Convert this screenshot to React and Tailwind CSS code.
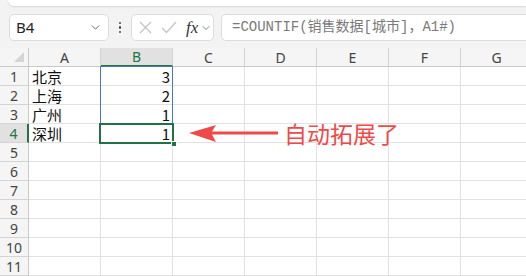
import React from 'react';
import { ChevronDown } from 'lucide-react';

const cols = ['A', 'B', 'C', 'D', 'E', 'F', 'G'];
const data = {
    1: ['北京', '3'],
    2: ['上海', '2'],
    3: ['广州', '1'],
    4: ['深圳', '1'],
};
const rows = [1, 2, 3, 4, 5, 6, 7, 8, 9, 10, 11];

const cellFont = { fontFamily: '"Noto Sans CJK SC", "Noto Sans", sans-serif' };

const App = () => {
    return (
        <div className="w-[526px] h-[276px] overflow-hidden bg-[#f3f3f3] relative" style={cellFont}>
            {/* ribbon bottom edge */}
            <div className="ml-2 h-[6px] bg-white rounded-bl-lg shadow-[0_1px_2px_rgba(0,0,0,0.12)]"></div>

            {/* formula bar */}
            <div className="flex items-center h-[27px] mt-[8px] pl-[9px] gap-0">
                <div className="w-[100px] h-[27px] bg-white border border-[#dcdcdc] rounded-[5px] flex items-center justify-between pl-[6px] pr-[6px]">
                    <span className="text-[15px] text-[#262626] leading-none" style={{ fontFamily: '"Noto Sans", sans-serif' }}>B4</span>
                    <ChevronDown className="w-[13px] h-[13px] text-[#555]" strokeWidth={1.6} />
                </div>
                <div className="w-[22px] flex flex-col items-center gap-[2px]">
                    <span className="w-[2.5px] h-[2.5px] rounded-full bg-[#444]"></span>
                    <span className="w-[2.5px] h-[2.5px] rounded-full bg-[#444]"></span>
                    <span className="w-[2.5px] h-[2.5px] rounded-full bg-[#444]"></span>
                </div>
                <div className="w-[83px] h-[27px] bg-white border border-[#dcdcdc] rounded-[5px] flex items-center pl-[5px]">
                    <svg width="15" height="15" viewBox="0 0 15 15" className="ml-[1px]">
                        <path d="M2 2 L13 13 M13 2 L2 13" stroke="#c4c4c4" strokeWidth="1.3" fill="none" />
                    </svg>
                    <svg width="16" height="15" viewBox="0 0 16 15" className="ml-[8px]">
                        <path d="M1 8 L5.5 12.5 L15 2" stroke="#c4c4c4" strokeWidth="1.3" fill="none" />
                    </svg>
                    <span className="ml-[9px] text-[17px] italic text-[#333] leading-none" style={{ fontFamily: '"Liberation Serif", serif' }}>fx</span>
                    <ChevronDown className="ml-[2px] w-[12px] h-[12px] text-[#666]" strokeWidth={1.6} />
                </div>
                <div className="ml-[7px] flex-1 h-[27px] bg-white border border-[#dcdcdc] rounded-l-[5px] border-r-0 flex items-center pl-[10px]">
                    <span className="text-[14px] text-[#7a7a7a] whitespace-nowrap" style={{ fontFamily: '"Liberation Mono", "Noto Sans CJK SC", monospace' }}>
                        =COUNTIF(销售数据[城市]，A1#)
                    </span>
                </div>
            </div>

            {/* sheet grid */}
            <div className="mt-[7px] relative bg-white">
                <div className="grid grid-cols-[29px_repeat(7,72px)] auto-rows-[19px]">
                    <div className="bg-[#f5f5f5] border-r border-b border-[#c9c9c9] relative">
                        <div className="absolute right-[4px] bottom-[4px] w-0 h-0 border-l-[10px] border-l-transparent border-b-[10px] border-b-[#d4d4d4]"></div>
                    </div>
                    {cols.map((c) => (
                        <div
                            key={c}
                            className={
                                c === 'B'
                                    ? 'bg-[#e1e1e1] border-r border-[#d4d4d4] border-b-2 border-b-[#217346] flex items-center justify-center text-[14px] text-[#217346]'
                                    : 'bg-[#f5f5f5] border-r border-b border-[#d4d4d4] border-b-[#c9c9c9] flex items-center justify-center text-[14px] text-[#444]'
                            }
                            style={{ fontFamily: '"Noto Sans", sans-serif' }}
                        >
                            {c}
                        </div>
                    ))}
                    {rows.map((r) => (
                        <React.Fragment key={r}>
                            <div
                                className={
                                    r === 4
                                        ? 'bg-[#e1e1e1] border-r-2 border-r-[#217346] border-b border-b-[#d4d4d4] flex items-center justify-center text-[14px] text-[#217346]'
                                        : 'bg-[#f5f5f5] border-r border-r-[#c9c9c9] border-b border-b-[#d4d4d4] flex items-center justify-center text-[14px] text-[#444]'
                                }
                                style={{ fontFamily: '"Noto Sans", sans-serif' }}
                            >
                                {r}
                            </div>
                            {cols.map((c, i) => (
                                <div
                                    key={c}
                                    className={
                                        'border-r border-b border-[#e1e1e1] flex items-center text-[15px] text-[#111] leading-none ' +
                                        (i === 1 ? 'justify-end pr-[2px]' : 'pl-[3px]')
                                    }
                                >
                                    {data[r] && i < 2 ? data[r][i] : ''}
                                </div>
                            ))}
                        </React.Fragment>
                    ))}
                </div>

                {/* spill range outline */}
                <div className="absolute left-[100px] top-[18px] w-[73px] h-[58px] border border-[#4a74c9] pointer-events-none"></div>
                {/* active cell B4 */}
                <div className="absolute left-[99px] top-[75px] w-[75px] h-[21px] border-2 border-[#217346] pointer-events-none"></div>
                <div className="absolute left-[171px] top-[93px] w-[6px] h-[6px] bg-[#217346] border border-white"></div>

                {/* annotation */}
                <svg className="absolute left-[186px] top-[74px]" width="96" height="24" viewBox="0 0 96 24">
                    <path d="M3 11 L30 3 L26 9.5 L92 9.5 L92 12.5 L26 12.5 L30 20 Z" fill="#ef4a4a" />
                </svg>
                <div className="absolute left-[284px] top-[71px] text-[23px] leading-[28px] text-[#ef4a4a] whitespace-nowrap">
                    自动拓展了
                </div>
            </div>
        </div>
    );
};

export default App;
